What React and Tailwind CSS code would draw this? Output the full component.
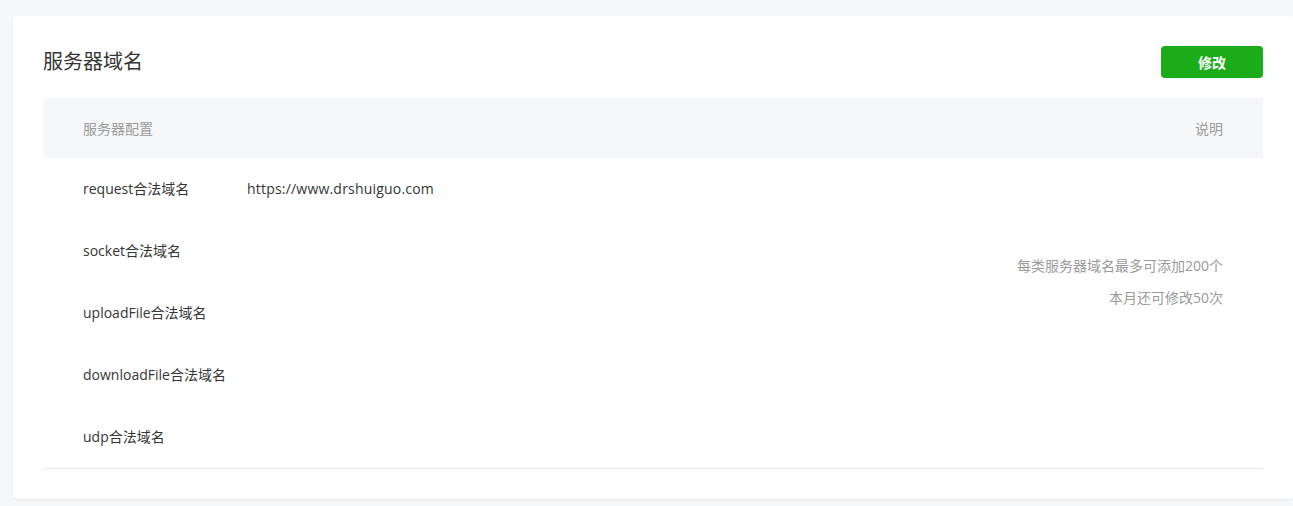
import React from 'react';

const rows = [
  { label: 'request合法域名', value: 'https://www.drshuiguo.com' },
  { label: 'socket合法域名', value: '' },
  { label: 'uploadFile合法域名', value: '' },
  { label: 'downloadFile合法域名', value: '' },
  { label: 'udp合法域名', value: '' },
];

const App = () => {
  return (
    <div
      className="min-h-[506px] bg-[#f6f7f9] pt-[16px] pl-[13px] pb-[8px]"
      style={{ fontFamily: '"Open Sans", "Noto Sans CJK SC", sans-serif' }}
    >
      <div className="bg-white rounded-[4px] shadow-[0_1px_2px_rgba(0,0,0,0.08)] px-[30px] pt-[30px] pb-[30px]">
        {/* 标题 */}
        <div className="flex items-center justify-between h-[32px]">
          <h2 className="text-[20px] text-[#353535] font-normal leading-none">服务器域名</h2>
          <button className="w-[102px] h-[32px] bg-[#1aad19] text-white text-[14px] font-bold rounded-[4px]">
            修改
          </button>
        </div>

        {/* 表格 */}
        <div className="mt-[20px] border-b border-[#e7e7eb]">
          <div className="flex items-center justify-between h-[60px] bg-[#f6f7f9] px-[40px] text-[14px] text-[#9a9a9a]">
            <span>服务器配置</span>
            <span>说明</span>
          </div>
          <div className="flex">
            <div className="flex-1">
              {rows.map((row) => (
                <div key={row.label} className="flex items-center h-[62px] pl-[40px] pb-[2px] text-[14px] text-[#353535]">
                  <span className="w-[164px] shrink-0">{row.label}</span>
                  <span className="tracking-[0.2px]">{row.value}</span>
                </div>
              ))}
            </div>
            <div className="pr-[40px] pt-[92px] text-right text-[14px] leading-[32px] text-[#9a9a9a]">
              <p>每类服务器域名最多可添加200个</p>
              <p>本月还可修改50次</p>
            </div>
          </div>
        </div>
      </div>
    </div>
  );
};

export default App;
